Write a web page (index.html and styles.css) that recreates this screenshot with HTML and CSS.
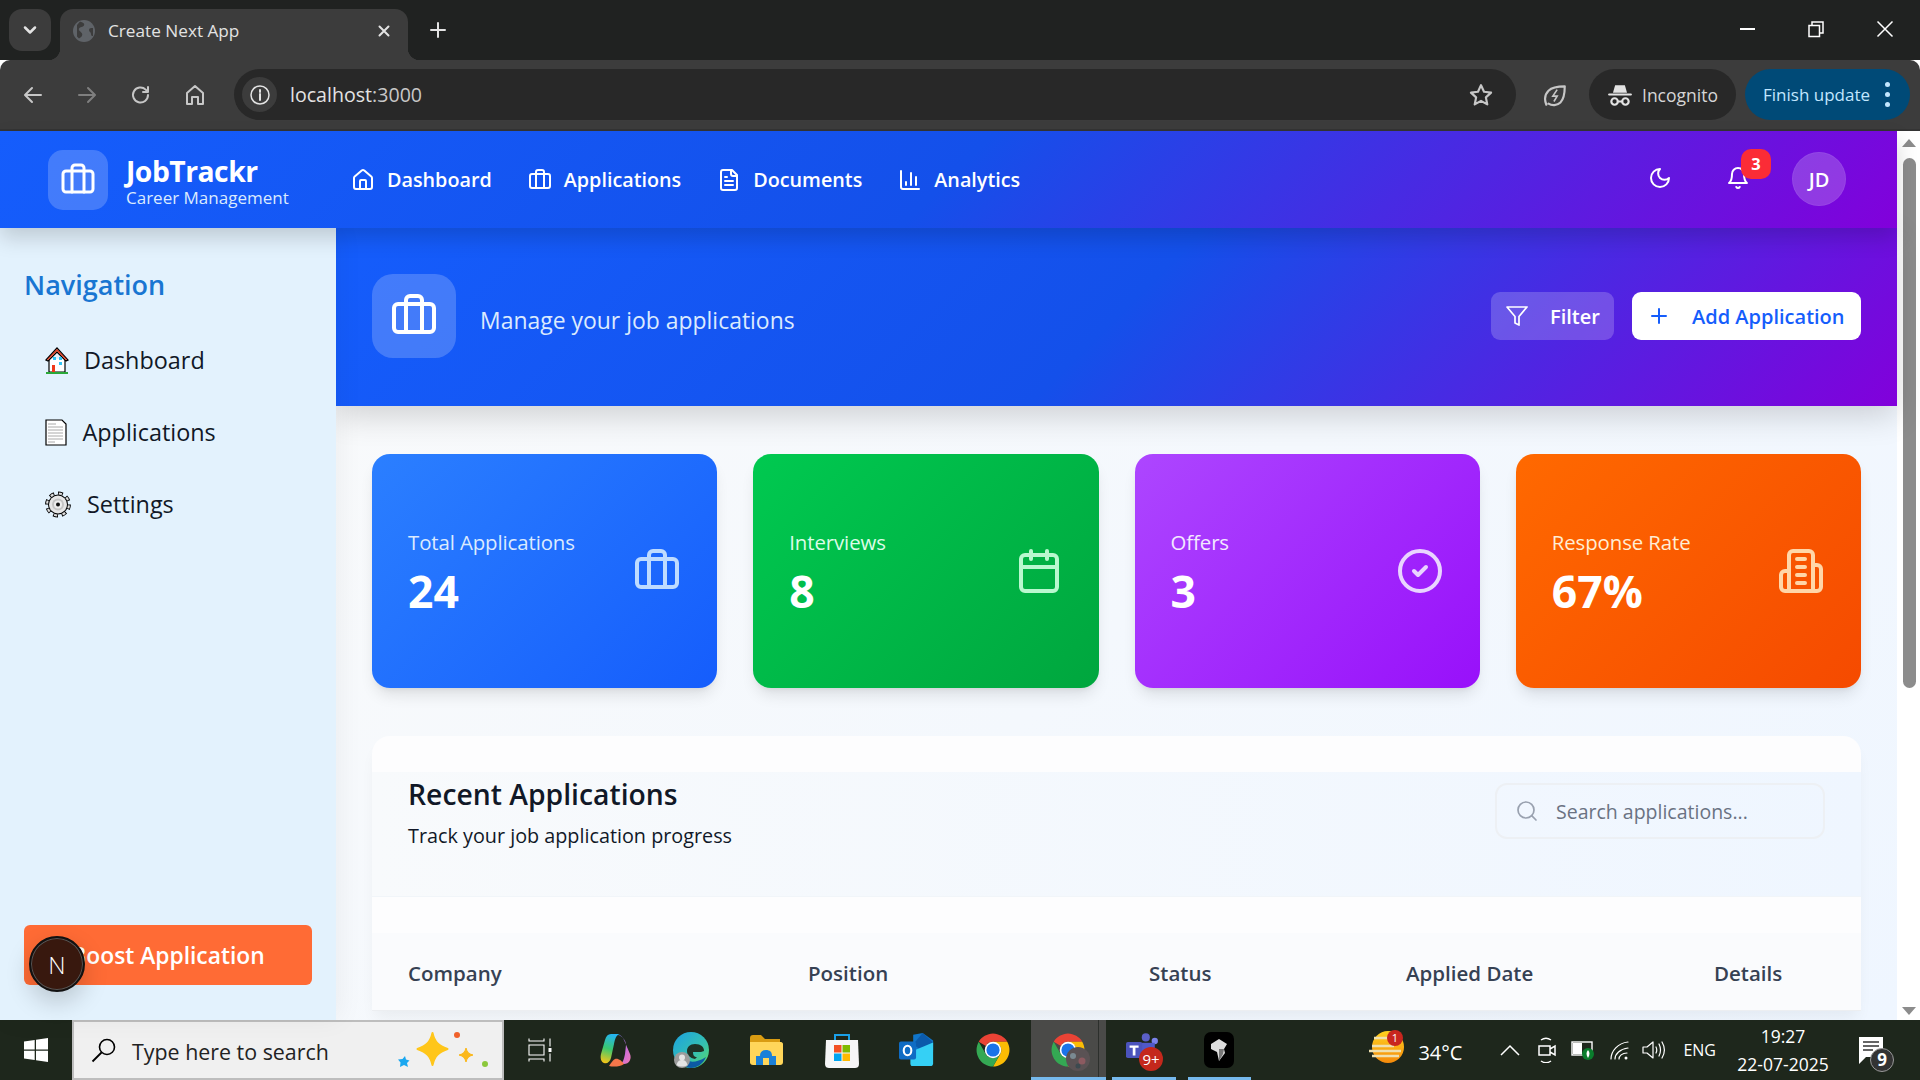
FILE: index.html
```html
<!DOCTYPE html>
<html lang="en">
<head>
<meta charset="utf-8">
<title>Create Next App</title>
<link rel="stylesheet" href="styles.css">
</head>
<body>
<svg class="defs" width="0" height="0" aria-hidden="true">
  <symbol id="i-case" viewBox="0 0 24 24"><rect x="2" y="6" width="20" height="14" rx="2"/><path d="M16 20V4a2 2 0 0 0-2-2h-4a2 2 0 0 0-2 2v16"/></symbol>
  <symbol id="i-chrome" viewBox="0 0 48 48">
    <path fill="#ea4335" d="M5 13A22 22 0 0 1 43 13H24A11 11 0 0 0 14.500 18.500Z"/>
    <path fill="#fbbc04" d="M43 13A22 22 0 0 1 24 46L33.500 29.500A11 11 0 0 0 33.500 18.500L24 13Z"/>
    <path fill="#34a853" d="M24 46A22 22 0 0 1 5 13L14.500 29.500A11 11 0 0 0 33.500 29.500Z"/>
    <circle cx="24" cy="24" r="11" fill="#fff"/><circle cx="24" cy="24" r="8.800" fill="#1a73e8"/>
  </symbol>
</svg>
<div class="screen">
  <div class="tabstrip">
    <div class="tab-search"><svg class="ico-16" viewBox="0 0 16 16"><path d="M4 6l4 4 4-4" class="s-w2"/></svg></div>
    <div class="tab">
      <svg class="favicon" viewBox="0 0 22 22"><circle cx="11" cy="11" r="11" fill="#5f6368"/><path fill="#3c3c3c" d="M7 1.500c3 1 5 2 4 4s-4 1-5 3 2 3 3 5-1 4-3 5l-2-2V5zM20 8c-2 0-4 0-4 2s2 2 2 4 1 2 2 2z"/></svg>
      <span class="tab-title">Create Next App</span>
      <svg class="tab-close" viewBox="0 0 16 16"><path d="M3.500 3.500l9 9m0-9l-9 9" class="s-w2"/></svg>
    </div>
    <svg class="tab-new" viewBox="0 0 18 18"><path d="M9 2v14M2 9h14" class="s-w2 light"/></svg>
    <div class="winctl">
      <svg viewBox="0 0 18 18"><path d="M2 9h15" class="s-w2 white"/></svg>
      <svg viewBox="0 0 18 18"><path d="M2 5.500h10.500v11H2zM5 5.500V2h11v11h-3.500" class="s-w15"/></svg>
      <svg viewBox="0 0 18 18"><path d="M1.500 1.500l15 15m0-15l-15 15" class="s-w15"/></svg>
    </div>
  </div>
  <div class="toolbar">
    <div class="nav-btn"><svg viewBox="0 0 24 24"><path d="M20 12H5m6-7l-7 7 7 7" class="s-w2 tool"/></svg></div>
    <div class="nav-btn"><svg viewBox="0 0 24 24"><path d="M4 12h15m-6-7l7 7-7 7" class="s-w2 dim"/></svg></div>
    <div class="nav-btn"><svg viewBox="0 0 24 24"><path d="M19 12a7.500 7.500 0 1 1-2.300-5.400L19 9M19 4v5h-5" class="s-w2 tool"/></svg></div>
    <div class="nav-btn"><svg viewBox="0 0 24 24"><path d="M4 21V10l8-7 8 7v11h-5v-7H9v7z" class="s-w2 tool"/></svg></div>
    <div class="omnibox">
      <div class="site-info"><svg viewBox="0 0 22 22"><circle cx="11" cy="11" r="9" class="s-w15 light"/><path d="M11 10v6M11 6v2" class="s-w2 light"/></svg></div>
      <span class="url"><span class="url-host">localhost</span>:3000</span>
      <svg class="star" viewBox="0 0 24 24"><path d="M12 3l2.800 6 6.500.8-4.800 4.400 1.300 6.500L12 17.400l-5.800 3.300 1.300-6.500-4.800-4.400 6.500-.8z" class="s-w2 tool"/></svg>
    </div>
    <div class="leaf"><svg viewBox="0 0 24 24"><path d="M4 21c-2-5-1-10 2-13s9-4 15-4c0 7-1 12-4 15s-8 3-11 1" class="s-w2 tool"/><path d="M14 7l-4 6h4l-3 5" class="s-w15 tool"/></svg></div>
    <div class="pill incog">
      <svg viewBox="0 0 24 24"><path fill="#e3e3e3" d="M7.500 3h9l2 7h-13z"/><path d="M2 11.500h20" class="s-w2 light"/><circle cx="7" cy="18" r="3" class="s-w2 light"/><circle cx="17" cy="18" r="3" class="s-w2 light"/><path d="M10 18h4" class="s-w2 light"/></svg>
      <span>Incognito</span>
    </div>
    <div class="pill finish">
      <span>Finish update</span>
      <span class="kebab"><i></i><i></i><i></i></span>
    </div>
  </div>

  <div class="page">
    <div class="viewport">
      <header class="topbar">
        <div class="brand">
          <div class="logo"><svg class="lu lu-36"><use href="#i-case"/></svg></div>
          <div class="brand-text"><div class="brand-name">JobTrackr</div><div class="brand-sub">Career Management</div></div>
        </div>
        <nav class="topnav">
          <a class="topnav-item"><svg class="lu lu-24" viewBox="0 0 24 24"><path d="M15 21v-8a1 1 0 0 0-1-1h-4a1 1 0 0 0-1 1v8"/><path d="M3 10a2 2 0 0 1 .709-1.528l7-5.999a2 2 0 0 1 2.582 0l7 5.999A2 2 0 0 1 21 10v9a2 2 0 0 1-2 2H5a2 2 0 0 1-2-2z"/></svg>Dashboard</a>
          <a class="topnav-item"><svg class="lu lu-24"><use href="#i-case"/></svg>Applications</a>
          <a class="topnav-item"><svg class="lu lu-24" viewBox="0 0 24 24"><path d="M15 2H6a2 2 0 0 0-2 2v16a2 2 0 0 0 2 2h12a2 2 0 0 0 2-2V7z"/><path d="M14 2v4a2 2 0 0 0 2 2h4M10 9H8M16 13H8M16 17H8"/></svg>Documents</a>
          <a class="topnav-item"><svg class="lu lu-24" viewBox="0 0 24 24"><path d="M3 3v16a2 2 0 0 0 2 2h16M18 17V9M13 17V5M8 17v-3"/></svg>Analytics</a>
        </nav>
        <div class="top-actions">
          <div class="icon-btn"><svg class="lu lu-24" viewBox="0 0 24 24"><path d="M12 3a6 6 0 0 0 9 9 9 9 0 1 1-9-9Z"/></svg></div>
          <div class="icon-btn"><svg class="lu lu-24" viewBox="0 0 24 24"><path d="M6 8a6 6 0 0 1 12 0c0 7 3 9 3 9H3s3-2 3-9"/><path d="M10.300 21a1.940 1.940 0 0 0 3.400 0"/></svg><span class="badge">3</span></div>
          <div class="avatar">JD</div>
        </div>
      </header>

      <div class="body-row">
        <aside class="sidebar">
          <h2 class="side-title">Navigation</h2>
          <ul class="side-list">
            <li class="side-item">
              <svg class="emoji-house" viewBox="0 0 24 27"><path fill="#fff" stroke="#000" stroke-width="1.200" d="M4 12v13h16V12"/><path fill="#f5efe6" stroke="#000" stroke-width="1.300" d="M1 13L12 1l11 12-2 1L12 5 3 14z"/><path fill="#e83b1f" d="M2 12.500L12 2l10 10.500-1 .5L12 4 3 13z"/><path fill="#2fc4f5" d="M8 10h3v3H8zM14 10h3v3h-3zM14 15h3v3h-3z"/><path fill="#f0381a" d="M7 18h3v7H7z"/><path fill="#2aa838" d="M1 25h22v2H1z"/></svg>
              <span>Dashboard</span>
            </li>
            <li class="side-item">
              <svg class="emoji-doc" viewBox="0 0 22 27"><path fill="#fff" stroke="#000" stroke-width="1.200" d="M1 1h16l4 4v21H1z"/><path stroke="#aaa" stroke-width="1" d="M3 5h8M3 8h15M3 11h15M3 14h15M3 17h15M3 20h15M3 23h7"/></svg>
              <span>Applications</span>
            </li>
            <li class="side-item">
              <svg class="emoji-gear" viewBox="0 0 26 27"><circle cx="13" cy="13.500" r="11.300" fill="none" stroke="#000" stroke-width="3.200" pathLength="8" stroke-dasharray=".56 .44"/><circle cx="13" cy="13.500" r="10" fill="#000"/><circle cx="13" cy="13.500" r="11" fill="none" stroke="#dedede" stroke-width="2" pathLength="8" stroke-dasharray=".36 .64" stroke-dashoffset="-.1"/><circle cx="13" cy="13.500" r="9" fill="#e6e6e6"/><circle cx="13" cy="13.500" r="6" fill="#c4c4c4"/><circle cx="13" cy="13.500" r="4" fill="#eee"/><circle cx="13" cy="13.500" r="2" fill="#111"/></svg>
              <span>Settings</span>
            </li>
          </ul>
          <button class="boost">Boost Application</button>
          <div class="next-badge"><span>N</span></div>
        </aside>

        <main class="main">
          <section class="hero">
            <div class="hero-icon"><svg class="lu lu-48"><use href="#i-case"/></svg></div>
            <p class="hero-text">Manage your job applications</p>
            <div class="hero-actions">
              <button class="btn btn-ghost"><svg class="lu lu-24 thin" viewBox="0 0 24 24"><path d="M22 3H2l8 9.460V19l4 2v-8.540z"/></svg>Filter</button>
              <button class="btn btn-white"><svg class="lu lu-24" viewBox="0 0 24 24"><path d="M5 12h14M12 5v14"/></svg>Add Application</button>
            </div>
          </section>

          <div class="content">
            <section class="stats">
              <article class="stat stat-blue"><div class="stat-text"><div class="stat-label">Total Applications</div><div class="stat-value">24</div></div><svg class="lu lu-48"><use href="#i-case"/></svg></article>
              <article class="stat stat-green"><div class="stat-text"><div class="stat-label">Interviews</div><div class="stat-value">8</div></div><svg class="lu lu-48" viewBox="0 0 24 24"><rect x="3" y="4" width="18" height="18" rx="2"/><path d="M16 2v4M8 2v4M3 10h18"/></svg></article>
              <article class="stat stat-purple"><div class="stat-text"><div class="stat-label">Offers</div><div class="stat-value">3</div></div><svg class="lu lu-48" viewBox="0 0 24 24"><circle cx="12" cy="12" r="10"/><path d="m9 12 2 2 4-4"/></svg></article>
              <article class="stat stat-orange"><div class="stat-text"><div class="stat-label">Response Rate</div><div class="stat-value">67%</div></div><svg class="lu lu-48" viewBox="0 0 24 24"><path d="M6 22V4a2 2 0 0 1 2-2h8a2 2 0 0 1 2 2v18Z"/><path d="M6 12H4a2 2 0 0 0-2 2v6a2 2 0 0 0 2 2h2M18 9h2a2 2 0 0 1 2 2v9a2 2 0 0 1-2 2h-2M10 6h4M10 10h4M10 14h4M10 18h4"/></svg></article>
            </section>

            <section class="panel">
              <div class="panel-head">
                <div>
                  <h2 class="panel-title">Recent Applications</h2>
                  <p class="panel-sub">Track your job application progress</p>
                </div>
                <div class="search">
                  <svg class="lu lu-24 thin" viewBox="0 0 24 24"><circle cx="11" cy="11" r="8"/><path d="m21 21-4.300-4.300"/></svg>
                  <span>Search applications...</span>
                </div>
              </div>
              <div class="table-head">
                <span>Company</span><span>Position</span><span>Status</span><span>Applied Date</span><span>Details</span>
              </div>
            </section>
          </div>
        </main>
      </div>
    </div>
    <div class="scrollbar">
      <svg class="sb-arrow" viewBox="0 0 16 10"><path d="M8 1l7 8H1z"/></svg>
      <div class="sb-thumb"></div>
      <svg class="sb-arrow sb-down" viewBox="0 0 16 10"><path d="M8 9L1 1h14z"/></svg>
    </div>
  </div>

  <footer class="taskbar">
    <div class="start"><svg viewBox="0 0 24 24"><path fill="#fff" d="M0 3.400L10.700 2v9.500H0zM12 1.800L24 0v11.500H12zM0 12.700h10.700V22L0 20.600zM12 12.700h12V24l-12-1.800z"/></svg></div>
    <div class="ts-box">
      <svg class="ts-glass" viewBox="0 0 26 26"><circle cx="16" cy="10" r="7.500" fill="none" stroke="#000" stroke-width="1.600"/><path d="M10.500 15.500L1.500 24.500" stroke="#000" stroke-width="1.800"/></svg>
      <span class="ts-text">Type here to search</span>
      <svg class="ts-art" viewBox="0 0 95 40"><path fill="#ffc61a" stroke="#ffc61a" stroke-width="2" stroke-linejoin="round" d="M37.500 3c2 9 6 13 15 16-9 3-13 7-15 16-2-9-6-13-15-16 9-3 13-7 15-16z"/><path fill="#fbb81c" stroke="#fbb81c" stroke-linejoin="round" d="M71 18c1 4 3 6 7 7-4 1-6 3-7 7-1-4-3-6-7-7 4-1 6-3 7-7z"/><path fill="#1aa7f0" d="M10 26l1 3.500 3.500 1-2.500 2.500 1 4-4-2-4 2 .500-4.500L3 29.500l4.500-.500z"/><circle cx="62" cy="5" r="3" fill="#f0612a"/><circle cx="90" cy="34" r="3" fill="#8cc83c"/></svg>
    </div>
    <div class="tasks">
      <div class="task"><svg class="ti-sm" viewBox="0 0 24 24"><path fill="none" stroke="#fff" stroke-width="1.100" d="M1 .5v2.500h15V.5M1 7h15v10H1zM1 23.500V21h15v2.500M22 .5v8M22 15.500v8"/><rect x="20.500" y="10" width="3" height="4" fill="#fff"/></svg></div>
      <div class="task"><svg class="ti" viewBox="0 0 36 36"><defs><linearGradient id="cp1" x1="0" y1="0" x2="1" y2="1"><stop offset="0" stop-color="#7f7cf2"/><stop offset=".6" stop-color="#d06fd8"/><stop offset="1" stop-color="#f07ab0"/></linearGradient><linearGradient id="cp2" x1=".5" y1="0" x2=".3" y2="1"><stop offset="0" stop-color="#25b4f2"/><stop offset=".5" stop-color="#3ac870"/><stop offset="1" stop-color="#f5c518"/></linearGradient></defs><path fill="url(#cp2)" d="M14 2h9c-4 1-5 5-6 10l-3 14c-1 4-4 6-7 5-3-1-4-5-3-9L8 8c1-4 3-6 6-6z"/><path fill="url(#cp1)" d="M21 3c3 0 5 2 6 5l6 14c2 5-1 10-6 10h-4c3-1 4-5 5-10l1-9c0-5-4-9-8-10z"/><path fill="#f5764a" d="M12 34c4 1 11 1 15-2-2-3-6-6-9-5-2 1-4 4-6 7z"/></svg></div>
      <div class="task"><svg class="ti" viewBox="0 0 36 36"><defs><linearGradient id="ed" x1="0" y1="0" x2="1" y2="1"><stop offset="0" stop-color="#1ba1e2"/><stop offset=".6" stop-color="#35c1b0"/><stop offset="1" stop-color="#5fd95f"/></linearGradient></defs><circle cx="18" cy="18" r="18" fill="url(#ed)"/><path fill="#0c59a4" d="M18 36c-6 0-9-5-7-10 3 4 11 6 22-1-3 7-9 11-15 11z"/><path fill="#1e2a1e" d="M22 27c-5-1-8-4-8-8s3-7 8-7c6 0 9 3 9 7l-3 1h-8c0 3 1 5 4 5z" opacity=".95"/><circle cx="9" cy="28" r="8" fill="#9c9c9c"/><circle cx="9" cy="25.500" r="3" fill="#e4e4e4"/><path fill="#e4e4e4" d="M3.500 33c1-4 3-5 5.500-5s4.500 1 5.500 5c-3 2-8 2-11 0z"/></svg></div>
      <div class="task"><svg class="ti" viewBox="0 0 36 36"><path fill="#d99c12" d="M2 6c0-2 1-3 3-3h8l4 4h15v22c0 2-1 3-3 3H5c-2 0-3-1-3-3z"/><path fill="#ffd65a" d="M2 10h31c1 0 2 1 2 2v18c0 2-1 3-3 3H5c-2 0-3-1-3-3z"/><path fill="#1b80d8" d="M12 24c0-4 2-6 6-6s6 2 6 6h4v9h-7v-7h-6v7H8v-9z"/></svg></div>
      <div class="task"><svg class="ti" viewBox="0 0 36 36"><path fill="none" stroke="#1aa0e8" stroke-width="2" d="M11 10V3h14v7"/><path fill="#f6f6f6" d="M2 8h32l1 24c0 3-2 4-4 4H5c-2 0-4-1-4-4z"/><path fill="#f25022" d="M10 13h7.500v7.500H10z"/><path fill="#7fba00" d="M18.500 13H26v7.500h-7.500z"/><path fill="#00a4ef" d="M10 21.500h7.500V29H10z"/><path fill="#ffb900" d="M18.500 21.500H26V29h-7.500z"/></svg></div>
      <div class="task"><svg class="ti" viewBox="0 0 38 36"><path fill="#1075c9" d="M15 2l10-2 11 8v10L15 24z"/><path fill="#0a4f9e" d="M25 0l11 10-13 8-8-6z" opacity=".7"/><path fill="#35d0f5" d="M12 20l24-10v22c0 2-1 3-3 3H14c-1 0-2-1-2-3z"/><rect x="0" y="9" width="18" height="19" rx="2" fill="#0f6cc4"/><ellipse cx="9" cy="18.500" rx="4" ry="5" fill="none" stroke="#fff" stroke-width="2.200"/></svg></div>
      <div class="task"><svg class="ti"><use href="#i-chrome"/></svg></div>
      <div class="task task-active"><svg class="ti"><use href="#i-chrome"/></svg><svg class="chrome-over" viewBox="0 0 24 24"><circle cx="12" cy="12" r="12" fill="#5a5254"/><circle cx="7" cy="9" r="3" fill="#7a8a92"/><circle cx="16" cy="14" r="3.500" fill="#8c5a60"/><circle cx="12" cy="19" r="2.500" fill="#3c4a50"/></svg></div>
      <div class="task task-on"><svg class="ti" viewBox="0 0 40 38"><circle cx="22" cy="5" r="4.500" fill="#5b5fc7"/><circle cx="32" cy="9" r="3.500" fill="#7b83eb"/><path fill="#5059c9" d="M10 11h22v16H10z"/><rect x="0" y="10" width="18" height="18" rx="2" fill="#4b53bc"/><path fill="#fff" d="M4 14h10v2.500h-3.500V25h-3v-8.500H4z"/></svg><span class="teams-badge">9+</span></div>
      <div class="task task-on"><svg class="ti" viewBox="0 0 36 36"><rect x="3" y="0" width="30" height="36" rx="7" fill="#000"/><path fill="#ddd" d="M10 12l8-5 8 5-3 5 1 4-6 8-2-9-6-3z"/><path fill="#777" d="M18 17l5 0-1 5-4 7z"/></svg></div>
    </div>
    <div class="tray">
      <svg class="tr-weather" viewBox="0 0 36 36"><defs><linearGradient id="wt" x1="0" y1="0" x2="0" y2="1"><stop offset="0" stop-color="#ffd21f"/><stop offset="1" stop-color="#f58a0b"/></linearGradient></defs><circle cx="19" cy="18" r="16" fill="url(#wt)"/><path stroke="#efe0b0" stroke-width="2.500" d="M5 9h18M3 17h22M0 22h32M3 27h27"/><circle cx="26" cy="9" r="8" fill="#c8261e"/><text x="26" y="13" class="tr-wnum">1</text></svg>
      <span class="tr-temp">34°C</span>
      <svg class="tr-chev" viewBox="0 0 20 12"><path d="M1 11l9-9 9 9" class="s-w15"/></svg>
      <svg class="tr-meet" viewBox="0 0 18 26"><path d="M1 9h11v9H1zM12 12l5-3v9l-5-3zM3 3c3-2 7-2 10 0M3 24c3 2 7 2 10 0" class="s-w15"/></svg>
      <svg class="tr-batt" viewBox="0 0 24 20"><rect x="1" y="2" width="20" height="13" fill="none" stroke="#fff" stroke-width="1.400"/><rect x="2" y="3" width="9" height="11" fill="#fff"/><circle cx="17" cy="14" r="6" fill="#0a7d2c"/><path d="M17 10c2 2 2 5 0 8-2-3-2-6 0-8z" fill="#fff"/></svg>
      <svg class="tr-wifi" viewBox="0 0 20 20"><path d="M1 19C1 11 8 3 18 2M5 19c0-5 5-10 13-11M9 19c0-3 3-6 8-6" class="s-w12"/><circle cx="16" cy="18" r="1.500" fill="#fff"/></svg>
      <svg class="tr-vol" viewBox="0 0 24 20"><path d="M1 7h4l6-5v16l-6-5H1zM14 7c1 2 1 4 0 6M17 4c2 4 2 8 0 12M20 2c3 5 3 11 0 16" class="s-w12"/></svg>
      <span class="tr-lang">ENG</span>
      <div class="tr-clock"><span>19:27</span><span>22-07-2025</span></div>
      <div class="tr-notif"><svg viewBox="0 0 26 30"><path fill="#fff" d="M1 1h24v20H8l-7 7z"/><path d="M5 6h16M5 10h16M5 14h10" stroke="#333" stroke-width="1.300"/></svg><span class="tr-nine">9</span></div>
    </div>
  </footer>
</div>
</body>
</html>
```
FILE: styles.css
```css
* { box-sizing: border-box; }
html, body { margin: 0; height: 100%; overflow: hidden; }
body { font-family: "Open Sans", "Noto Sans", "Liberation Sans", sans-serif; color: #111827; }
.defs { position: absolute; }
h2, p, ul { margin: 0; padding: 0; }
button { font-family: inherit; border: 0; cursor: pointer; }

.screen { display: flex; flex-direction: column; width: 1920px; height: 1080px; overflow: hidden; }

/* stroke helpers */
.s-w2, .s-w15, .s-w12 { fill: none; stroke: #e3e3e3; stroke-linecap: round; stroke-linejoin: round; }
.s-w2 { stroke-width: 2; }
.s-w15 { stroke-width: 1.500; stroke: #fff; stroke-linecap: butt; stroke-linejoin: miter; }
.s-w12 { stroke-width: 1.200; stroke: #fff; }
.s-w2.light, .s-w15.light { stroke: #e3e3e3; }
.s-w2.white { stroke: #fff; stroke-linecap: butt; }
.s-w2.tool { stroke: #c7c7c7; }
.s-w2.dim { stroke: #7f7f7f; }
.s-w15.tool { stroke: #c7c7c7; }
.ico-16 { width: 20px; height: 20px; }

/* Browser chrome */
.tabstrip { display: flex; align-items: flex-start; height: 60px; padding: 9px 0 0 9px; background: #202221; flex: none; }
.tab-search { display: flex; align-items: center; justify-content: center; width: 42px; height: 42px; border-radius: 13px; background: #3c3c3c; }
.tab { position: relative; display: flex; align-items: center; width: 348px; height: 51px; margin-left: 9px; padding: 0 16px 8px 13px; background: #3c3c3c; border-radius: 13px 13px 0 0; }
.tab::before, .tab::after { content: ""; position: absolute; bottom: 0; width: 12px; height: 12px; }
.tab::before { left: -12px; background: radial-gradient(circle at 0 0, transparent 12px, #3c3c3c 12.500px); }
.tab::after { right: -12px; background: radial-gradient(circle at 100% 0, transparent 12px, #3c3c3c 12.500px); }
.favicon { width: 22px; height: 22px; flex: none; }
.tab-title { margin-left: 13px; font-size: 17.200px; color: #e3e3e3; }
.tab-close { width: 16px; height: 16px; margin-left: auto; }
.tab-new { width: 18px; height: 18px; margin: 12px 0 0 21px; }
.winctl { display: flex; gap: 51px; margin: 11px 0 0 auto; padding-right: 26px; }
.winctl svg { width: 18px; height: 18px; }

.toolbar { display: flex; align-items: center; flex: none; height: 71px; padding: 0 10px 0 6px; background: #3c3c3c; border-bottom: 2px solid #343434; border-radius: 10px 10px 0 0; }
.nav-btn { display: flex; align-items: center; justify-content: center; width: 54px; flex: none; }
.nav-btn svg { width: 24px; height: 24px; }
.omnibox { display: flex; align-items: center; flex: 1; height: 51px; margin-left: 12px; padding: 0 22px 0 8px; background: #282828; border-radius: 26px; }
.site-info { display: flex; align-items: center; justify-content: center; width: 35px; height: 35px; border-radius: 50%; background: #3c3c3c; }
.site-info svg { width: 22px; height: 22px; }
.url { margin-left: 13px; font-size: 19.600px; color: #c7c7c7; }
.url-host { color: #e3e3e3; }
.star { width: 26px; height: 26px; margin-left: auto; }
.leaf { display: flex; justify-content: center; width: 50px; margin: 0 9px 0 14px; }
.leaf svg { width: 26px; height: 26px; }
.pill { display: flex; align-items: center; height: 51px; border-radius: 26px; font-size: 17.500px; }
.incog { width: 147px; padding-left: 18px; gap: 9px; background: #282828; color: #d6d6d6; }
.incog svg { width: 26px; height: 26px; }
.finish { width: 165px; margin-left: 9px; padding-left: 18px; background: #004a77; color: #c2e7ff; font-size: 17px; }
.kebab { display: flex; flex-direction: column; gap: 5px; margin-left: auto; margin-right: 20px; }
.kebab i { display: block; width: 5px; height: 5px; border-radius: 50%; background: #c2e7ff; }

/* Page */
.page { display: flex; flex: 1; min-height: 0; }
.viewport { display: flex; flex-direction: column; flex: 1; min-width: 0; }
.lu { fill: none; stroke: currentColor; stroke-width: 2; stroke-linecap: round; stroke-linejoin: round; flex: none; }
.lu.thin { stroke-width: 1.700; }
.lu-24 { width: 24px; height: 24px; }
.lu-36 { width: 36px; height: 36px; }
.lu-48 { width: 48px; height: 48px; }

.topbar { position: relative; z-index: 3; display: flex; align-items: center; flex: none; height: 97px; padding-left: 48px; color: #fff; background: linear-gradient(135deg, #155dfc 0%, #1450ea 50%, #8200db 100%); box-shadow: 0 10px 20px rgba(0, 0, 0, .16); }
.brand { display: flex; align-items: center; gap: 18px; width: 303px; flex: none; }
.logo { display: flex; align-items: center; justify-content: center; width: 60px; height: 60px; border-radius: 15px; background: rgba(255, 255, 255, .2); }
.brand-name { padding-top: 2px; font-size: 28.300px; font-weight: 700; line-height: 34px; letter-spacing: -.5px; }
.brand-sub { font-size: 17px; line-height: 20px; color: #dbeafe; }
.topnav { display: flex; gap: 36px; }
.topnav-item { display: flex; align-items: center; gap: 12px; font-size: 19.750px; font-weight: 600; }
.top-actions { display: flex; align-items: center; gap: 30px; margin-left: auto; padding-right: 51px; }
.icon-btn { position: relative; display: flex; align-items: center; justify-content: center; width: 48px; height: 48px; padding-bottom: 3px; }
.badge { position: absolute; top: -7px; left: 27px; width: 30px; height: 30px; border-radius: 10px; background: #fb2c36; font-size: 16.500px; font-weight: 700; line-height: 30px; text-align: center; }
.avatar { display: flex; align-items: center; justify-content: center; width: 54px; height: 54px; margin-bottom: 1px; border-radius: 50%; background: rgba(255, 255, 255, .2); border: 1px solid rgba(255, 255, 255, .06); font-size: 20px; font-weight: 600; }

.body-row { display: flex; flex: 1; min-height: 0; }
.sidebar { position: relative; z-index: 2; display: flex; flex-direction: column; width: 336px; flex: none; padding: 36px 24px 35px; background: #e3f2fd; box-shadow: 4px 0 24px rgba(0, 0, 0, .05); }
.side-title { font-size: 27px; font-weight: 600; line-height: 40px; padding-top: 1px; color: #1976d2; }
.side-list { margin-top: 19px; list-style: none; }
.side-item { display: flex; align-items: center; height: 72px; padding-left: 21px; font-size: 23.400px; font-weight: 500; color: #111827; }
.emoji-house { width: 24px; height: 27px; margin-right: 15px; }
.emoji-doc { width: 22px; height: 27px; margin-right: 15.500px; }
.emoji-gear { width: 26px; height: 27px; margin-right: 16px; }
.boost { height: 60px; margin-top: auto; padding-top: 2px; border-radius: 6px; background: #ff6b35; color: #fff; font-size: 22.800px; font-weight: 600; }
.next-badge { position: absolute; left: 29px; top: 708px; display: flex; align-items: center; justify-content: center; width: 56px; height: 56px; border-radius: 50%; background: #38180e; border: 2px solid #111; box-shadow: 0 0 0 1px #555 inset, 0 10px 24px rgba(0, 0, 0, .18); color: #fff; font-size: 24px; font-weight: 300; }

.main { display: flex; flex-direction: column; flex: 1; min-width: 0; background: linear-gradient(135deg, #f9fafb, #eff6ff); }
.hero { position: relative; z-index: 1; display: flex; align-items: center; flex: none; height: 178px; padding: 0 36px 2px; color: #fff; background: linear-gradient(135deg, #155dfc 0%, #1450ea 50%, #8200db 100%); box-shadow: 0 10px 30px rgba(0, 0, 0, .16); }
.hero-icon { display: flex; align-items: center; justify-content: center; width: 84px; height: 84px; margin-right: 24px; border-radius: 21px; background: rgba(255, 255, 255, .2); }
.hero-text { margin-top: 8px; font-size: 22.950px; color: #dbeafe; }
.hero-actions { display: flex; gap: 18px; margin-left: auto; }
.btn { display: flex; align-items: center; height: 48px; border-radius: 9px; font-size: 20px; font-weight: 600; }
.btn-ghost { width: 123px; padding-left: 14px; gap: 21px; background: rgba(255, 255, 255, .2); color: #fff; }
.btn-white { width: 229px; padding-left: 15px; gap: 21px; background: #fff; color: #155dfc; }

.content { display: flex; flex-direction: column; gap: 48px; padding: 48px 36px 0; }
.stats { display: grid; grid-template-columns: repeat(4, 1fr); gap: 36px; }
.stat { display: flex; align-items: center; justify-content: space-between; height: 234px; padding: 0 36px; border-radius: 18px; color: #dbeafe; box-shadow: 0 10px 15px -3px rgba(0, 0, 0, .1), 0 4px 6px -4px rgba(0, 0, 0, .1); }
.stat-text { padding-top: 2px; }
.stat-label { font-size: 20.400px; font-weight: 500; line-height: 28px; letter-spacing: -.1px; }
.stat-value { margin-top: 10px; font-size: 44.500px; font-weight: 700; line-height: 50px; color: #fff; }
.stat-blue { background: linear-gradient(135deg, #2b7fff, #155dfc); }
.stat-blue .lu { color: #bedbff; }
.stat-green { background: linear-gradient(135deg, #00c950, #00a63e); color: #dcfce7; }
.stat-green .lu { color: #b9f8cf; }
.stat-purple { background: linear-gradient(135deg, #ad46ff, #9810fa); color: #f3e8ff; }
.stat-purple .lu { color: #e9d4ff; }
.stat-orange { background: linear-gradient(135deg, #ff6900, #f54a00); color: #ffedd4; }
.stat-orange .lu { color: #ffd6a8; }

.panel { padding-top: 36px; border-radius: 18px 18px 0 0; background: #fdfdfe; box-shadow: 0 10px 15px -3px rgba(0, 0, 0, .05); }
.panel-head { display: flex; justify-content: space-between; align-items: flex-start; padding: 1px 36px 45px; background: linear-gradient(90deg, #f8fafc, #eff6ff); border-bottom: 1px solid #f1f5f9; }
.panel-title { font-size: 28.300px; font-weight: 600; line-height: 42px; color: #111827; }
.panel-sub { margin-top: 6px; font-size: 19.800px; line-height: 30px; color: #111827; }
.search { display: flex; align-items: center; gap: 17px; width: 330px; height: 56px; margin-top: 10px; padding-left: 18px; border: 2px solid #edf0f4; border-radius: 12px; background: transparent; color: #99a1af; font-size: 19.500px; }
.search span { color: #6a7282; }
.table-head { display: grid; grid-template-columns: 400px 341px 257px 308px 1fr; align-items: center; height: 78px; margin-top: 36px; padding: 2px 36px 0; background: #fafbfd; border-bottom: 1px solid #eceef1; font-size: 20.500px; font-weight: 600; color: #364153; }

.scrollbar { display: flex; flex-direction: column; align-items: center; width: 23px; flex: none; padding: 0 0 4px 1px; background: #fff; }
.sb-arrow { width: 16px; height: 10px; margin-top: 7px; fill: #8c8c8c; flex: none; }
.sb-thumb { width: 13px; height: 530px; margin-top: 10px; border-radius: 7px; background: #8c8c8c; }
.sb-down { margin-top: auto; }

/* Taskbar */
.taskbar { display: flex; flex: none; align-items: center; height: 60px; background: #1e271c; color: #fff; }
.start { display: flex; align-items: center; justify-content: center; width: 72px; flex: none; }
.start svg { width: 24px; height: 24px; }
.ts-box { display: flex; align-items: center; width: 432px; height: 60px; flex: none; padding-left: 17px; background: #f0f0f0; border: 2px solid #bdbdbd; color: #1f2937; }
.ts-glass { width: 26px; height: 26px; flex: none; }
.ts-text { margin: 2px 0 0 15px; font-size: 21.400px; color: #222; }
.ts-art { width: 95px; height: 40px; margin-left: auto; margin-right: 12px; }
.tasks { display: flex; margin-left: -2px; }
.task { position: relative; display: flex; align-items: center; justify-content: center; width: 75.500px; height: 60px; flex: none; }
.ti { width: 36px; height: 36px; }
.ti-sm { width: 24px; height: 24px; }
.task-active { background: linear-gradient(90deg, #4a4a48 89%, #2c2f2c 89%, #2c2f2c 91%, #4a4a48 91%); }
.task-active::after, .task-on::after { content: ""; position: absolute; bottom: 0; left: 6px; right: 6px; height: 3px; background: #76b9ed; }
.task-active::after { left: 0; right: 0; }
.chrome-over { position: absolute; left: 35px; top: 27px; width: 24px; height: 24px; }
.teams-badge { position: absolute; left: 33px; top: 27px; width: 24px; height: 24px; border-radius: 50%; background: #c4281c; color: #fff; font-size: 15px; line-height: 24px; text-align: center; }
.tray { display: flex; align-items: center; margin-left: auto; }
.tr-weather { width: 36px; height: 36px; margin-bottom: 6px; }
.tr-wnum { font-size: 11px; fill: #fff; text-anchor: middle; }
.tr-temp { margin: 4px 0 0 13px; font-size: 20px; }
.tr-chev { width: 20px; height: 12px; margin-left: 38px; }
.tr-meet { width: 18px; height: 26px; margin-left: 18px; }
.tr-batt { width: 24px; height: 20px; margin-left: 15px; }
.tr-wifi { width: 20px; height: 20px; margin-left: 15px; }
.tr-vol { width: 24px; height: 20px; margin-left: 12px; }
.tr-lang { margin-left: 17px; font-size: 16px; }
.tr-clock { display: flex; flex-direction: column; align-items: center; width: 130px; margin-left: 2px; font-size: 17.500px; line-height: 28px; }
.tr-notif { position: relative; width: 44px; height: 44px; margin-right: 28px; padding: 8px 0 0 10px; }
.tr-notif svg { width: 26px; height: 30px; }
.tr-nine { position: absolute; left: 22px; top: 20px; width: 24px; height: 24px; border-radius: 50%; background: #333; border: 1px solid #999; font-size: 17px; font-weight: 700; line-height: 22px; text-align: center; }
```
